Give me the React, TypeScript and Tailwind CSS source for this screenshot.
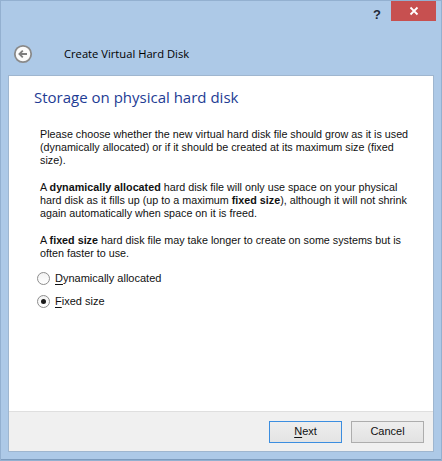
import React from "react";

const body = { fontFamily: '"Liberation Sans", Arial, sans-serif' };
const ui = { fontFamily: '"Open Sans", "Noto Sans", sans-serif' };

function BackButton() {
    return (
        <svg width="20" height="20" viewBox="0 0 20 20">
            <circle cx="10" cy="10" r="8.2" fill="#fbfbfb" stroke="#8a8a8a" strokeWidth="1.8" />
            <path d="M14 10H6.5M9.8 6.6L6.4 10l3.4 3.4" fill="none" stroke="#7d7d7d" strokeWidth="1.8" />
        </svg>
    );
}

function Radio({ accel, rest, checked }: { accel: string; rest: string; checked?: boolean }) {
    return (
        <div className="flex items-center h-[23px]">
            <span className="w-[13px] h-[13px] rounded-full border border-[#8d8d8d] bg-gradient-to-b from-[#f2f2f2] to-white flex items-center justify-center">
                {checked && <span className="w-[5px] h-[5px] rounded-full bg-[#1a1a1a]" />}
            </span>
            <span className="ml-[5px] text-[11px] text-[#111]" style={body}>
                <span className="underline underline-offset-2">{accel}</span>
                {rest}
            </span>
        </div>
    );
}

export default function App() {
    return (
        <div className="w-[442px] h-[461px] bg-[#adc9e7] border border-[#93b0d0] flex flex-col">
            {/* Caption buttons */}
            <div className="flex justify-end items-start h-[21px]">
                <span className="mt-[4px] mr-[10px] text-[13px] font-bold text-[#1f2a38]" style={body}>?</span>
                <div className="w-[45px] h-[20px] bg-[#c75050] mr-[5px] flex items-center justify-center">
                    <svg width="10" height="10" viewBox="0 0 10 10">
                        <path d="M1.5 1.5l7 7M8.5 1.5l-7 7" stroke="white" strokeWidth="1.8" />
                    </svg>
                </div>
            </div>

            {/* Wizard header */}
            <div className="flex items-start h-[53px] pl-[12px] pt-[22px]">
                <BackButton />
                <span className="ml-[31px] text-[11.2px] leading-[20px] text-black" style={ui}>Create Virtual Hard Disk</span>
            </div>

            {/* Page */}
            <div className="mx-[7px] flex-1 flex flex-col border border-[#9fb6cf]">
                <div className="flex-1 bg-white pl-[25px] pr-4 pt-[10px]">
                    <h1 className="text-[15px] leading-[22px] text-[#1e3c94]" style={ui}>Storage on physical hard disk</h1>
                    <div className="pl-[6px] mt-[20px] text-[10.75px] leading-[13px] text-[#111] whitespace-nowrap" style={body}>
                        <p>
                            Please choose whether the new virtual hard disk file should grow as it is used<br />
                            (dynamically allocated) or if it should be created at its maximum size (fixed<br />
                            size).
                        </p>
                        <p className="mt-[14px]">
                            A <b>dynamically allocated</b> hard disk file will only use space on your physical<br />
                            hard disk as it fills up (up to a maximum <b>fixed size</b>), although it will not shrink<br />
                            again automatically when space on it is freed.
                        </p>
                        <p className="mt-[14px]">
                            A <b>fixed size</b> hard disk file may take longer to create on some systems but is<br />
                            often faster to use.
                        </p>
                        <div className="mt-[7px] -ml-[3px]">
                            <Radio accel="D" rest="ynamically allocated" />
                            <Radio accel="F" rest="ixed size" checked />
                        </div>
                    </div>
                </div>

                {/* Footer */}
                <div className="h-[40px] bg-[#f0f0f0] border-t border-[#dfdfdf] flex items-center justify-end gap-[9px] pr-[9px]">
                    <button className="w-[73px] h-[22px] border border-[#3c8ee0] bg-gradient-to-b from-[#eeeeee] to-[#e4e4e4] text-[11px] text-[#111]" style={body}>
                        <span className="underline underline-offset-2">N</span>ext
                    </button>
                    <button className="w-[73px] h-[22px] border border-[#adadad] bg-gradient-to-b from-[#eeeeee] to-[#e2e2e2] text-[11px] text-[#111]" style={body}>
                        Cancel
                    </button>
                </div>
            </div>
            <div className="h-[8px] border-b border-[#7d9bbd]" />
        </div>
    );
}
